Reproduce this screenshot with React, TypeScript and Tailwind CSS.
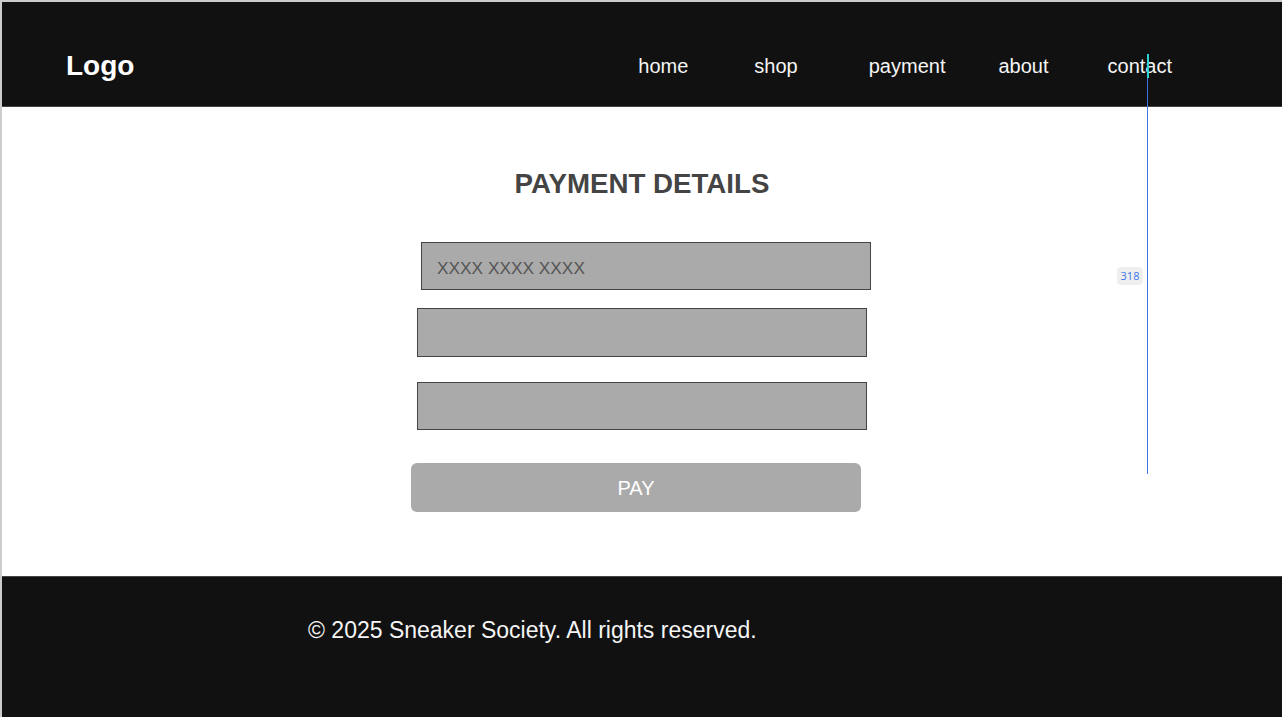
const navLinks = [
  { label: "home", gap: "" },
  { label: "shop", gap: "ml-[66px]" },
  { label: "payment", gap: "ml-[71px]" },
  { label: "about", gap: "ml-[53px]" },
  { label: "contact", gap: "ml-[59px]" },
];

function Header() {
  return (
    <header className="flex items-center h-[105px] pt-[24px] pl-[64px] pr-[110px] bg-[#111111] border-b border-[#444444]">
      <div className="text-[28px] font-bold text-white">Logo</div>
      <nav className="ml-auto flex items-center">
        {navLinks.map((link) => (
          <a key={link.label} href="#" className={`text-[20px] text-[#f5f5f5] ${link.gap}`}>
            {link.label}
          </a>
        ))}
      </nav>
    </header>
  );
}

function PaymentForm() {
  return (
    <main className="flex flex-col items-center pt-[63px] pb-[64px] bg-white">
      <h1 className="text-[27.7px] leading-[27px] font-bold text-[#444444]">PAYMENT DETAILS</h1>

      <input
        className="mt-[45px] ml-[8px] w-[450px] h-[48px] pl-[15px] pt-[4px] bg-[#aaaaaa] border border-[#444444] text-[17.3px] text-[#333333] placeholder:text-[#555555] outline-none"
        placeholder="XXXX XXXX XXXX"
      />
      <input className="mt-[18px] w-[450px] h-[49px] pl-[15px] bg-[#aaaaaa] border border-[#444444] outline-none" />
      <input className="mt-[25px] w-[450px] h-[48px] pl-[15px] bg-[#aaaaaa] border border-[#444444] outline-none" />

      <button
        type="button"
        className="mt-[33px] mr-[12px] w-[450px] h-[49px] rounded-[6px] bg-[#aaaaaa] text-[20px] text-white"
      >
        PAY
      </button>
    </main>
  );
}

function Footer() {
  return (
    <footer className="h-[141px] pt-[36px] pl-[306px] bg-[#111111] border-t border-[#444444]">
      <p className="text-[23px] text-[#f5f5f5]">© 2025 Sneaker Society. All rights reserved.</p>
    </footer>
  );
}

export default function App() {
  return (
    <div
      className="relative h-[717px] overflow-hidden bg-white border-l-2 border-t-2 border-[#cccccc]"
      style={{ fontFamily: '"Liberation Sans", Arial, sans-serif' }}
    >
      <Header />
      <PaymentForm />
      <Footer />

      {/* measuring guide overlay */}
      <div className="absolute left-[1145px] top-[52px] w-px h-[420px] bg-[#3b78e7]" />
      <div className="absolute left-[1145px] top-[52px] w-[2px] h-[24px] bg-[#2fd3d3]" />
      <div
        className="absolute left-[1115px] top-[265px] w-[26px] h-[18px] flex items-center justify-center rounded-sm bg-[#efefef] text-[11px] text-[#3b78e7]"
        style={{ fontFamily: '"Open Sans", sans-serif' }}
      >
        318
      </div>
    </div>
  );
}
